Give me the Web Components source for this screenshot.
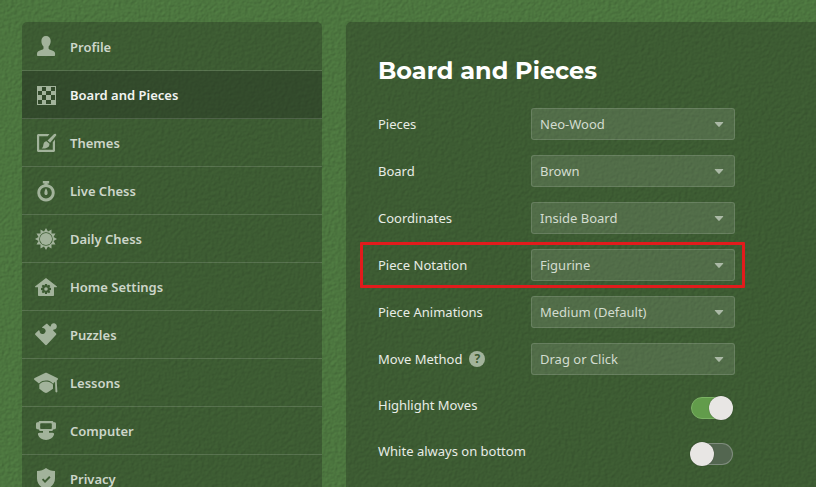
<!DOCTYPE html>
<html lang="en">
<head>
<meta charset="utf-8">
<title>Settings</title>
<style>
  html { height: 100%; }
  body {
    margin: 0; height: 100%; overflow: hidden; background: #4a733d;
    font: 13px/20px "Noto Sans", "Open Sans", sans-serif; color: #e8ece6;
  }
</style>
</head>
<body>
<settings-page>
  <settings-nav slot="nav">
    <nav-item>
      <svg slot="icon" viewBox="0 0 24 24"><path d="M12 1c3 0 4.700 2 4.700 5 0 2.400-.9 4.400-2.100 5.600v1.700c0 .8.500 1.200 1.500 1.500 3.200.8 5 1.700 5 4v1.200c0 .6-.4 1-1 1H4c-.6 0-1-.4-1-1v-1.200c0-2.300 1.800-3.200 5-4 1-.3 1.500-.7 1.500-1.500v-1.700C8.300 10.400 7.400 8.400 7.400 6c0-3 1.600-5 4.600-5z"/></svg>Profile</nav-item>
    <nav-item active>
      <svg slot="icon" viewBox="0 0 24 24"><path fill-rule="evenodd" d="M3 3h19v19H3zM8 4v4h4V4zM17 4v4h4V4zM4 8v4h4V8zM12 8v4h5V8zM8 12v5h4v-5zM17 12v5h4v-5zM4 17v4h4v-4zM12 17v4h5v-4z"/></svg>Board and Pieces</nav-item>
    <nav-item>
      <svg slot="icon" viewBox="0 0 24 24"><path d="M15.500 3H4.500C3.600 3 3 3.600 3 4.500v15c0 .9.600 1.500 1.500 1.500h15c.9 0 1.500-.6 1.500-1.500v-11l-2.200 2.700v7.600H5.200V5.200h8.500z"/><path d="M22 3.200c.5.500.3 1-.1 1.500l-5.800 7-2.600-2.100 6.300-6.300c.7-.7 1.600-.8 2.200-.1zM12.600 10.200l2.900 2.500c.2 3.600-3.200 5.200-7.900 4.700 1.700-1.100 1.500-2.500 1.900-4.300.3-1.700 1.600-2.800 3.100-2.900z"/></svg>Themes</nav-item>
    <nav-item>
      <svg slot="icon" viewBox="0 0 24 24"><path fill-rule="evenodd" d="M8.800 2h6.400v2.500h-1.600v.7a8.700 8.700 0 1 1-3.200 0v-.7H8.800zM12 7.900a5.800 5.800 0 1 0 0 11.600 5.800 5.800 0 0 0 0-11.600z"/><path d="M12 9.200c1 1.600 1.600 3.200 1.600 4.700 0 1.300-.6 2.100-1.600 2.100s-1.600-.8-1.600-2.100c0-1.500.6-3.100 1.600-4.700z"/></svg>Live Chess</nav-item>
    <nav-item>
      <svg slot="icon" viewBox="0 0 24 24"><path fill-rule="evenodd" d="M12 1l2 3.500 3.500-2 0 4 4 0-2 3.500L23 12l-3.500 2 2 3.500-4 0 0 4-3.500-2L12 23l-2-3.500-3.500 2 0-4-4 0 2-3.500L1 12l3.500-2-2-3.500 4 0 0-4 3.500 2zM12 5.200a6.800 6.800 0 1 0 0 13.600 6.800 6.800 0 0 0 0-13.600z"/><circle cx="12" cy="12" r="6.100"/></svg>Daily Chess</nav-item>
    <nav-item>
      <svg slot="icon" viewBox="0 0 24 24"><path fill-rule="evenodd" d="M12 3l10.700 8.300c.5.500.3 1-.4 1H20V20c0 .7-.3 1-1 1H5c-.7 0-1-.3-1-1v-7.700H1.700c-.7 0-.9-.5-.4-1zM11 9l-.4 1.600-1.700-.9-1.200 1.400 1 1.400-1.700.6v1.800l1.700.6-1 1.500 1.300 1.300 1.600-1 .5 1.700h1.800l.5-1.700 1.600 1 1.300-1.300-1-1.500 1.700-.6v-1.800l-1.700-.6 1-1.400-1.300-1.400-1.600.9L13 9zm1 3.200a1.800 1.800 0 1 1 0 3.600 1.800 1.800 0 0 1 0-3.600z"/></svg>Home Settings</nav-item>
    <nav-item>
      <svg slot="icon" viewBox="0 0 24 24"><path d="M11.800 1.300c.6-.6 1.300-.6 1.900 0l2 2c.5.500 1.100.3 1.200-.5.200-1.700 1.500-2.700 3.200-2.500 2.500.3 3.600 3.400 2 5.200-.6.700-1.300.9-2.200 1-.8.100-1 .7-.5 1.200l2.500 2.600c.6.600.6 1.200 0 1.800l-8.800 9.500c-.7.700-1.500.7-2.200 0l-9.400-9.500c-.6-.6-.6-1.200 0-1.800L4.400 7.400c.5-.5 1.100-.3 1.200.5.100 2.200 1.600 3.400 3.500 3 2.400-.4 3.300-3.200 1.800-4.900-.6-.6-1.200-.8-2-.9-.8-.1-1-.7-.5-1.200z"/></svg>Puzzles</nav-item>
    <nav-item>
      <svg slot="icon" viewBox="0 0 24 24"><path d="M11 1.900c.7-.3 1.400-.3 2 0l10.300 5c.7.400 1 1 .5 1.600l-1.100 1.200.7 10.600c0 .7-.4 1.200-1 1.200s-1-.5-1-1.200l-.4-9.600-2 2C16.500 10 14.500 9.500 12 9.500s-4.800.6-7 3.100L.3 8.700c-.5-.6-.4-1.300.4-1.700zM5.300 13.500C7 11.200 9 10.400 12 10.400s5 .8 7 3.100v4.200c-2 1.200-3.800 2.700-5.600 3.800-.9.600-1.900.6-2.800 0-1.800-1.100-3.300-2.600-5.300-3.800z"/></svg>Lessons</nav-item>
    <nav-item>
      <svg slot="icon" viewBox="0 0 24 24"><path fill-rule="evenodd" d="M6 2h12c.8 0 1.300.5 1.500 1.300h1c.9 0 1.500.6 1.500 1.500v4c0 .9-.6 1.500-1.500 1.500h-1c-.2.800-.7 1.400-1.500 1.700h-3v1.800h3.500c1.200 0 2 .8 1.500 2-1.100 3.200-4 5.200-8 5.200s-6.900-2-8-5.200c-.5-1.200.3-2 1.500-2H9V12H6c-.8-.3-1.300-.9-1.500-1.700h-1c-.9 0-1.500-.6-1.500-1.500v-4c0-.9.6-1.500 1.500-1.500h1C4.700 2.500 5.200 2 6 2zm1 2.200c-.5 0-.8.300-.8.800v4.200c0 .5.300.8.800.8h10c.5 0 .8-.3.800-.8V5c0-.5-.3-.8-.8-.8z"/></svg>Computer</nav-item>
    <nav-item>
      <svg slot="icon" viewBox="0 0 24 24"><path fill-rule="evenodd" d="M12 1c2.500 2 5.200 3 9 3v7.500c0 5-3.500 8.500-9 11.500-5.500-3-9-6.500-9-11.500V4c3.800 0 6.500-1 9-3zm3.200 8L11 13.200l-1.800-1.700-1.300 1.300L11 15.900l5.500-5.500z"/></svg>Privacy</nav-item>
  </settings-nav>
  <settings-panel heading="Board and Pieces">
    <select-row label="Pieces" value="Neo-Wood"></select-row>
    <select-row label="Board" value="Brown"></select-row>
    <select-row label="Coordinates" value="Inside Board"></select-row>
    <select-row label="Piece Notation" value="Figurine" marked></select-row>
    <select-row label="Piece Animations" value="Medium (Default)"></select-row>
    <select-row label="Move Method" value="Drag or Click" help></select-row>
    <toggle-row slot="toggles" label="Highlight Moves" checked></toggle-row>
    <toggle-row slot="toggles" label="White always on bottom"></toggle-row>
  </settings-panel>
</settings-page>
<script>
class Base extends HTMLElement {
  connectedCallback() {
    if (!this.shadowRoot) this.attachShadow({ mode: "open" }).innerHTML = this.view();
  }
}

customElements.define("settings-page", class extends Base {
  view() {
    return `<style>
      :host { display: block; height: 100%; position: relative; isolation: isolate; }
      .felt { position: absolute; inset: 0; width: 100%; height: 100%; z-index: -1; }
      .columns { display: grid; grid-template-columns: 300px minmax(0, 1fr); gap: 24px; padding: 22px 0 0 22px; height: 100%; box-sizing: border-box; }
    </style>
    <svg class="felt" aria-hidden="true">
      <filter id="felt" x="0" y="0" width="100%" height="100%" color-interpolation-filters="sRGB">
        <feTurbulence type="fractalNoise" baseFrequency="0.3" numOctaves="3" seed="4"/>
        <feColorMatrix values="0 0 0 0 0  0 0 0 0 0  0 0 0 0 0  1 0 0 0 0"/>
        <feDiffuseLighting surfaceScale="0.4" diffuseConstant="1.17" lighting-color="#4b743e">
          <feDistantLight azimuth="225" elevation="60"/>
        </feDiffuseLighting>
      </filter>
      <rect width="100%" height="100%" filter="url(#felt)"/>
    </svg>
    <div class="columns"><slot name="nav"></slot><slot></slot></div>`;
  }
});

customElements.define("settings-nav", class extends Base {
  view() {
    return `<style>
      :host { display: block; }
      nav { padding-top: 1px; background: rgba(38, 51, 31, .38); border-radius: 5px 5px 0 0; overflow: hidden; }
    </style><nav><slot></slot></nav>`;
  }
});

customElements.define("nav-item", class extends Base {
  view() {
    return `<style>
      :host { display: block; }
      a { display: flex; align-items: center; gap: 12px; height: 48px; padding: 0 12px; box-sizing: border-box;
          border-bottom: 1px solid rgba(255, 255, 255, .14); color: #cdd6ca; font-weight: 600; text-decoration: none; }
      :host([active]) a { background: rgba(30, 40, 30, .32); color: #f2f4f1; }
      ::slotted(svg) { width: 24px; height: 24px; fill: #a2b39b; flex: none; }
    </style><a href="#"${this.hasAttribute("active") ? ' aria-current="page"' : ""}><slot name="icon"></slot><span><slot></slot></span></a>`;
  }
});

customElements.define("settings-panel", class extends Base {
  view() {
    return `<style>
      :host { display: block; background: rgba(38, 51, 31, .38); border-radius: 5px 0 0 0; padding: 32px; }
      h1 { margin: 0 0 13px; font: 700 24px/34px Montserrat, Inter, sans-serif; color: #fff; }
      .form { max-width: 357px; }
      .toggles { padding-top: 2px; }
    </style>
    <h1>${this.getAttribute("heading")}</h1>
    <div class="form"><slot></slot><div class="toggles"><slot name="toggles"></slot></div></div>`;
  }
});

customElements.define("select-row", class extends Base {
  view() {
    const help = this.hasAttribute("help") ? `<button type="button" aria-label="Help">?</button>` : "";
    return `<style>
      :host { display: grid; grid-template-columns: 153px minmax(0, 1fr); align-items: center; padding: 7px 0 8px; position: relative; }
      :host([marked])::after { content: ""; position: absolute; inset: 0 -10px 1px -18px; border: 3px solid #e21b1c; border-radius: 1px; pointer-events: none; }
      .name { display: flex; align-items: center; gap: 7px; }
      button { width: 16px; height: 16px; padding: 0; border: 0; border-radius: 50%; background: #a2b39b; color: #3c5a31; font: 700 12px/16px "Noto Sans", sans-serif; }
      .field { position: relative; }
      select { appearance: none; display: block; width: 100%; height: 32px; padding: 0 32px 0 8px; border: 1px solid rgba(255, 255, 255, .13);
               border-radius: 3px; background: rgba(255, 255, 255, .11); color: #d3dcd0; font: inherit; }
      .field svg { position: absolute; right: 11px; top: 14px; width: 10px; height: 5px; fill: #abb9a6; pointer-events: none; }
    </style>
    <div class="name"><label for="s">${this.getAttribute("label")}</label>${help}</div>
    <div class="field"><select id="s"><option>${this.getAttribute("value")}</option></select>
      <svg viewBox="0 0 11 6"><path d="M1 0h9q1 0 .4.800L6.300 5.500q-.8.700-1.600 0L.6.800Q0 0 1 0z"/></svg></div>`;
  }
});

customElements.define("toggle-row", class extends Base {
  view() {
    return `<style>
      :host { display: flex; align-items: center; justify-content: space-between; height: 46px; padding-right: 2px; }
      label { padding-bottom: 6px; }
      input { appearance: none; display: flex; align-items: center; width: 42px; height: 22px; margin: 0; box-sizing: border-box;
              border: 1px solid rgba(255, 255, 255, .25); border-radius: 11px; background: #536650; }
      input::before { content: ""; flex: none; width: 24px; height: 24px; margin: 0 -2px; border-radius: 50%; background: #e8e6e4; box-shadow: 0 0 1px rgba(0, 0, 0, .5); }
      input:checked { background: #629c4b; border-color: #7bb264; justify-content: flex-end; }
      input:checked::before { margin: 0 -1px; }
    </style>
    <label for="t">${this.getAttribute("label")}</label>
    <input id="t" type="checkbox" role="switch"${this.hasAttribute("checked") ? " checked" : ""}>`;
  }
});
</script>
</body>
</html>
